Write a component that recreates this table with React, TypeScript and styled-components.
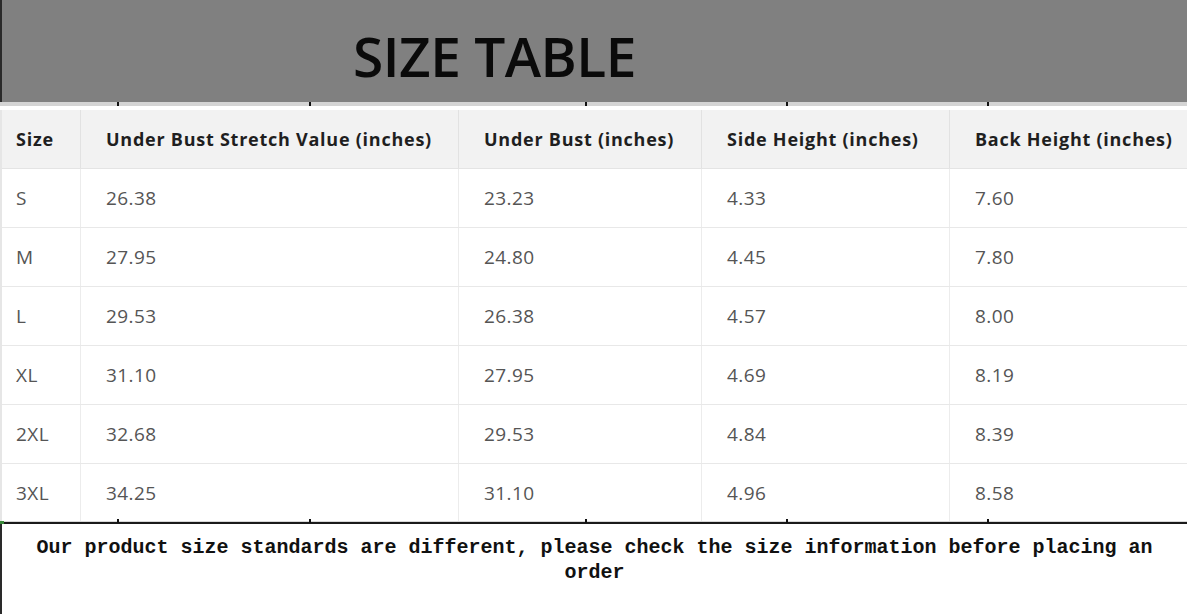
import React from 'react';
import styled, { createGlobalStyle } from 'styled-components';

type SizeRow = {
  size: string,
  stretch: string,
  underBust: string,
  side: string,
  back: string
}

const columns = ['Size', 'Under Bust Stretch Value (inches)', 'Under Bust (inches)', 'Side Height (inches)', 'Back Height (inches)'];

const rows: SizeRow[] = [
  { size: 'S', stretch: '26.38', underBust: '23.23', side: '4.33', back: '7.60' },
  { size: 'M', stretch: '27.95', underBust: '24.80', side: '4.45', back: '7.80' },
  { size: 'L', stretch: '29.53', underBust: '26.38', side: '4.57', back: '8.00' },
  { size: 'XL', stretch: '31.10', underBust: '27.95', side: '4.69', back: '8.19' },
  { size: '2XL', stretch: '32.68', underBust: '29.53', side: '4.84', back: '8.39' },
  { size: '3XL', stretch: '34.25', underBust: '31.10', side: '4.96', back: '8.58' },
];

const tickXs = [117, 309, 585, 786, 987];

const GlobalStyle = createGlobalStyle`
  html, body {
    margin: 0;
    padding: 0;
    background: #ffffff;
  }
  body {
    font-family: "Open Sans", "Liberation Sans", sans-serif;
  }
`;

export default function App() {
  return (
    <>
      <GlobalStyle />
      <Page>
        <Banner>
          <Title>SIZE TABLE</Title>
        </Banner>
        <Strip>
          {tickXs.map((x) => (
            <Tick key={x} style={{ left: x }} />
          ))}
        </Strip>
        <Table>
          <HeaderRow>
            {columns.map((c, i) => (
              <HeadCell key={c} $first={i === 0}>{c}</HeadCell>
            ))}
          </HeaderRow>
          {rows.map((r) => (
            <BodyRow key={r.size}>
              <Cell $first>{r.size}</Cell>
              <Cell>{r.stretch}</Cell>
              <Cell>{r.underBust}</Cell>
              <Cell>{r.side}</Cell>
              <Cell>{r.back}</Cell>
            </BodyRow>
          ))}
        </Table>
        <BottomRule>
          {tickXs.map((x) => (
            <Tick key={x} style={{ left: x }} $bottom />
          ))}
          <Corner />
        </BottomRule>
        <Note>
          Our product size standards are different, please check the size information before placing an order
        </Note>
      </Page>
    </>
  );
}

const Page = styled.div`
  width: 1187px;
  height: 614px;
  display: flex;
  flex-direction: column;
  overflow: hidden;
`;

const Banner = styled.div`
  height: 102px;
  background: #808080;
  border-left: 2px solid #2a2a2a;
  display: flex;
  align-items: center;
  padding-left: 351px;
  box-sizing: border-box;
`;

const Title = styled.h1`
  margin: 0;
  padding-top: 8px;
  font-family: "Open Sans", sans-serif;
  font-weight: 600;
  font-size: 55px;
  letter-spacing: -0.5px;
  color: #0a0a0a;
`;

const Strip = styled.div`
  position: relative;
  height: 4px;
  background: #d4d4d4;
  border-bottom: 4px solid #ffffff;
`;

const Tick = styled.span<{ $bottom?: boolean }>`
  position: absolute;
  top: ${(p) => (p.$bottom ? '-2px' : '0')};
  width: 2px;
  height: 4px;
  background: #111;
`;

const Table = styled.div`
  display: flex;
  flex-direction: column;
  border-left: 2px solid #e6e6e6;
`;

const gridCols = '78px 378px 243px 248px 1fr';

const HeaderRow = styled.div`
  display: grid;
  grid-template-columns: ${gridCols};
  height: 59px;
  background: #f2f2f2;
  border-bottom: 1px solid #e4e4e4;
  box-sizing: border-box;
`;

const BodyRow = styled.div`
  display: grid;
  grid-template-columns: ${gridCols};
  height: 59px;
  background: #ffffff;
  border-bottom: 1px solid #e8e8e8;
  box-sizing: border-box;

  &:last-child {
    height: 57px;
    border-bottom: none;
  }
`;

const HeadCell = styled.div<{ $first?: boolean }>`
  display: flex;
  align-items: center;
  padding-left: ${(p) => (p.$first ? '14px' : '25px')};
  border-left: ${(p) => (p.$first ? 'none' : '1px solid #e2e2e2')};
  font-size: 18px;
  font-weight: 700;
  letter-spacing: 0.75px;
  color: #1f1f1f;
  white-space: nowrap;
`;

const Cell = styled.div<{ $first?: boolean }>`
  display: flex;
  align-items: center;
  padding-left: ${(p) => (p.$first ? '14px' : '25px')};
  border-left: ${(p) => (p.$first ? 'none' : '1px solid #ececec')};
  font-size: 19px;
  letter-spacing: 0.4px;
  color: #555555;
`;

const BottomRule = styled.div`
  position: relative;
  height: 1px;
  background: #d8d8d8;
  border-bottom: 2px solid #1a1a1a;
`;

const Corner = styled.span`
  position: absolute;
  left: 0;
  top: 0;
  width: 4px;
  height: 3px;
  background: #3a8a3a;
`;

const Note = styled.div`
  flex: 1;
  border-left: 2px solid #2a2a2a;
  padding: 11px 20px 0;
  text-align: center;
  font-family: "Liberation Mono", "DejaVu Sans Mono", monospace;
  font-weight: 700;
  font-size: 20px;
  line-height: 25px;
  color: #111;
`;
